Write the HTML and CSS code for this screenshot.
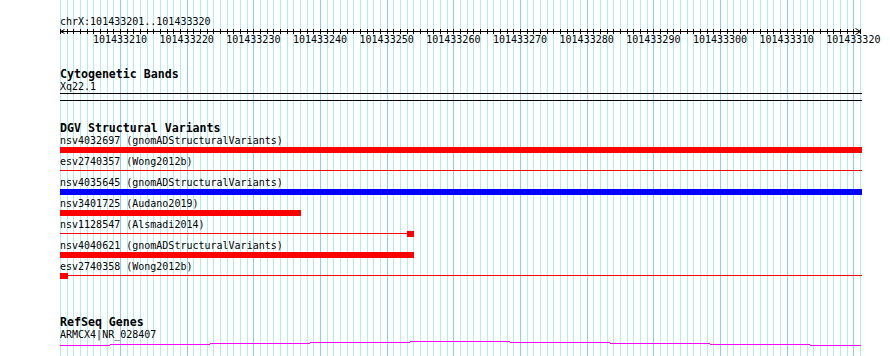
FILE: index.html
```html
<!DOCTYPE html>
<html lang="en">
<head>
    <meta charset="UTF-8">
    <meta name="viewport" content="width=device-width, initial-scale=1.0">
    <title>chrX:101433201..101433320</title>
    <link rel="stylesheet" href="styles.css">
</head>
<body>
    <div class="panel">
        <div class="locus">chrX:101433201..101433320</div>

        <svg class="ruler" width="802" height="19" viewBox="0 0 802 19">
            <defs>
                <pattern id="ticks" width="20" height="5" patternUnits="userSpaceOnUse">
                    <rect x="0" y="0" width="1" height="5"/>
                    <rect x="7" y="0" width="1" height="5"/>
                    <rect x="13" y="0" width="1" height="5"/>
                </pattern>
            </defs>
            <rect x="0" y="1" width="801" height="5" fill="url(#ticks)"/>
            <rect x="0" y="3" width="801" height="1"/>
            <path class="arrow" d="M0.5 3.5 L4.5 1.5 M0.5 3.5 L4.5 5.5 M800.5 3.5 L795.5 0.5 M800.5 3.5 L795.5 6.5"/>
            <text x="60" y="15">101433210</text>
            <text x="126.67" y="15">101433220</text>
            <text x="193.33" y="15">101433230</text>
            <text x="260" y="15">101433240</text>
            <text x="326.67" y="15">101433250</text>
            <text x="393.33" y="15">101433260</text>
            <text x="460" y="15">101433270</text>
            <text x="526.67" y="15">101433280</text>
            <text x="593.33" y="15">101433290</text>
            <text x="660" y="15">101433300</text>
            <text x="726.67" y="15">101433310</text>
            <text x="793.33" y="15">101433320</text>
        </svg>

        <section class="track cyto">
            <h2 class="track-title">Cytogenetic Bands</h2>
            <div class="feat-label">Xq22.1</div>
            <div class="band"></div>
        </section>

        <section class="track dgv">
            <h2 class="track-title">DGV Structural Variants</h2>

            <div class="sv">
                <div class="feat-label">nsv4032697 (gnomADStructuralVariants)</div>
                <div class="sv-track"><div class="sv-bar red" style="width:802px"></div></div>
            </div>
            <div class="sv">
                <div class="feat-label">esv2740357 (Wong2012b)</div>
                <div class="sv-track"><div class="sv-line" style="width:802px"></div></div>
            </div>
            <div class="sv">
                <div class="feat-label">nsv4035645 (gnomADStructuralVariants)</div>
                <div class="sv-track"><div class="sv-bar blue" style="width:802px"></div></div>
            </div>
            <div class="sv">
                <div class="feat-label">nsv3401725 (Audano2019)</div>
                <div class="sv-track"><div class="sv-bar red" style="width:241px"></div></div>
            </div>
            <div class="sv">
                <div class="feat-label">nsv1128547 (Alsmadi2014)</div>
                <div class="sv-track">
                    <div class="sv-line" style="width:347px"></div>
                    <div class="sv-bar red" style="width:7px"></div>
                </div>
            </div>
            <div class="sv">
                <div class="feat-label">nsv4040621 (gnomADStructuralVariants)</div>
                <div class="sv-track"><div class="sv-bar red" style="width:354px"></div></div>
            </div>
            <div class="sv">
                <div class="feat-label">esv2740358 (Wong2012b)</div>
                <div class="sv-track">
                    <div class="sv-bar red" style="width:8px"></div>
                    <div class="sv-line" style="width:794px"></div>
                </div>
            </div>
        </section>

        <section class="track refseq">
            <h2 class="track-title">RefSeq Genes</h2>
            <div class="feat-label">ARMCX4|NR_028407</div>
            <svg class="intron" width="802" height="5" viewBox="0 0 802 5">
                <path d="M0 4h50v1H0z M50 3h100v1H50z M150 2h100v1H150z M250 1h100v1H250z M350 0h100v1H350z M450 1h100v1H450z M550 2h100v1H550z M650 3h100v1H650z M750 4h51v1H750z"/>
            </svg>
        </section>
    </div>
</body>
</html>
```

FILE: styles.css
```css
* {
    box-sizing: border-box;
}

body {
    margin: 0;
    background: #fff;
    color: #000;
    font-family: "DejaVu Sans Mono", "Liberation Mono", monospace;
}

/* grid: one line per base (6.667px), heavier every 10 bases */
.panel {
    width: 802px;
    min-height: 100vh;
    margin-left: 60px;
    background-image:
        linear-gradient(to right, #87cefa 0 1px, transparent 1px 67px, #87cefa 67px 68px, transparent 68px 133px, #87cefa 133px 134px, transparent 134px),
        linear-gradient(to right, #afeeee 0 1px, transparent 1px 7px, #afeeee 7px 8px, transparent 8px 13px, #afeeee 13px 14px, transparent 14px);
    background-size: 200px 100%, 20px 100%;
    background-position: 60px 0, 0 0;
}

.locus {
    padding-top: 15px;
    font-size: 10px;
    line-height: 13px;
}

.ruler {
    display: block;
    overflow: visible;
}

.ruler text {
    font-family: "DejaVu Sans Mono", "Liberation Mono", monospace;
    font-size: 10px;
    text-anchor: middle;
}

.ruler .arrow {
    fill: none;
    stroke: #000;
    stroke-width: 1;
}

.track-title {
    margin: 0;
    font-size: 11.6px;
    line-height: 12px;
    font-weight: bold;
}

.feat-label {
    font-size: 10px;
    line-height: 13px;
    white-space: nowrap;
}

.cyto {
    padding-top: 21px;
}

.band {
    height: 8px;
    border-top: 1px solid #000;
    border-bottom: 1px solid #000;
}

.dgv {
    padding-top: 21px;
}

.sv-track {
    height: 8px;
    display: flex;
    align-items: flex-start;
}

.sv-bar {
    height: 6px;
    flex: none;
}

.sv-line {
    height: 1px;
    margin-top: 2px;
    background: #f00;
    flex: none;
}

.red {
    background: #f00;
}

.blue {
    background: #00f;
}

.refseq {
    padding-top: 35px;
}

.intron {
    display: block;
    fill: #f0f;
}
```
